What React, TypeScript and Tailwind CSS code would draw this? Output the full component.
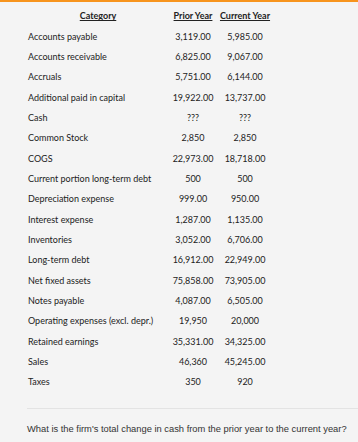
import React from 'react';

const rows: [string, string, string][] = [
  ['Accounts payable', '3,119.00', '5,985.00'],
  ['Accounts receivable', '6,825.00', '9,067.00'],
  ['Accruals', '5,751.00', '6,144.00'],
  ['Additional paid in capital', '19,922.00', '13,737.00'],
  ['Cash', '???', '???'],
  ['Common Stock', '2,850', '2,850'],
  ['COGS', '22,973.00', '18,718.00'],
  ['Current portion long-term debt', '500', '500'],
  ['Depreciation expense', '999.00', '950.00'],
  ['Interest expense', '1,287.00', '1,135.00'],
  ['Inventories', '3,052.00', '6,706.00'],
  ['Long-term debt', '16,912.00', '22,949.00'],
  ['Net fixed assets', '75,858.00', '73,905.00'],
  ['Notes payable', '4,087.00', '6,505.00'],
  ['Operating expenses (excl. depr.)', '19,950', '20,000'],
  ['Retained earnings', '35,331.00', '34,325.00'],
  ['Sales', '46,360', '45,245.00'],
  ['Taxes', '350', '920'],
];

const App = () => {
  return (
    <div className="w-[358px] h-[442px] bg-[#f4f4f4] border-t-2 border-[#f7941d] overflow-hidden">
      <div className="pl-[28px] pt-[4px] font-['Lato',sans-serif] text-[9px] text-[#222] whitespace-nowrap">
        <div className="grid grid-cols-[140px_50px_54px] h-[20.33px] items-center font-bold">
          <span className="text-center underline">Category</span>
          <span className="text-center underline">Prior Year</span>
          <span className="text-center underline">Current Year</span>
        </div>
        {rows.map(([label, prior, current]) => (
          <div key={label} className="grid grid-cols-[140px_50px_54px] h-[20.33px] items-center">
            <span>{label}</span>
            <span className="text-center">{prior}</span>
            <span className="text-center">{current}</span>
          </div>
        ))}
      </div>
      <div className="ml-[27px] mt-[16px] border-t border-[#e3e3e3]" />
      <p className="ml-[27px] mt-[13px] font-['Liberation_Sans',Arial,sans-serif] text-[9.35px] text-[#333]">
        What is the firm's total change in cash from the prior year to the current year?
      </p>
    </div>
  );
};

export default App;
